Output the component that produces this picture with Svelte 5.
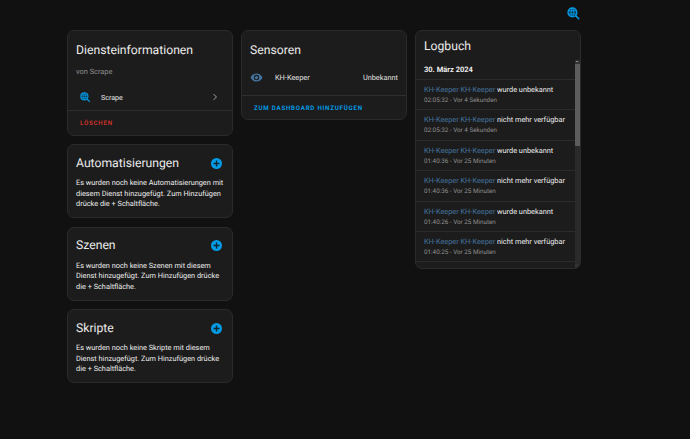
<script>
  const logs = [
    ['wurde unbekannt', '02:05:32 - Vor 4 Sekunden'],
    ['nicht mehr verfügbar', '02:05:32 - Vor 4 Sekunden'],
    ['wurde unbekannt', '01:40:36 - Vor 25 Minuten'],
    ['nicht mehr verfügbar', '01:40:36 - Vor 25 Minuten'],
    ['wurde unbekannt', '01:40:26 - Vor 25 Minuten'],
    ['nicht mehr verfügbar', '01:40:25 - Vor 25 Minuten'],
    ['wurde unbekannt', '01:40:25 - Vor 25 Minuten']
  ];
</script>

{#snippet plus()}
  <svg class="plus" viewBox="0 0 24 24"><circle cx="12" cy="12" r="12" fill="#039be5" /><path d="M12 5.500v13M5.500 12h13" stroke="#10242f" stroke-width="3" fill="none" /></svg>
{/snippet}

{#snippet webSearch(cls)}
  <svg class="globe {cls}" viewBox="0 0 24 24">
    <path d="M15.500 15.500 22.500 22.500" stroke="currentColor" stroke-width="2.800" fill="none" />
    <circle cx="10" cy="10" r="8.200" fill="#0b3a52" stroke="currentColor" stroke-width="2.400" />
    <path d="M2 7h16M2 13h16M10 2c-3.600 5-3.600 11 0 16M10 2c3.600 5 3.600 11 0 16" stroke="currentColor" stroke-width="1.700" fill="none" />
  </svg>
{/snippet}

<div class="page">
  <header class="top">
    {@render webSearch('top-icon')}
  </header>
  <main class="columns">
    <div class="col">
      <section class="card info">
        <h2 class="info-title">Diensteinformationen</h2>
        <p class="by">von Scrape</p>
        <div class="service">
          {@render webSearch('service-icon')}
          <span class="grow">Scrape</span>
          <svg class="chev" viewBox="0 0 24 24"><path d="M8.600 5 15.500 12l-6.900 7" fill="none" stroke="currentColor" stroke-width="2.400" /></svg>
        </div>
        <div class="actions"><span class="btn danger">LÖSCHEN</span></div>
      </section>

      <section class="card pad">
        <div class="head"><h2>Automatisierungen</h2>{@render plus()}</div>
        <p class="note">Es wurden noch keine Automatisierungen mit diesem Dienst hinzugefügt. Zum Hinzufügen drücke die + Schaltfläche.</p>
      </section>

      <section class="card pad">
        <div class="head"><h2>Szenen</h2>{@render plus()}</div>
        <p class="note">Es wurden noch keine Szenen mit diesem Dienst hinzugefügt. Zum Hinzufügen drücke die + Schaltfläche.</p>
      </section>

      <section class="card pad">
        <div class="head"><h2>Skripte</h2>{@render plus()}</div>
        <p class="note">Es wurden noch keine Skripte mit diesem Dienst hinzugefügt. Zum Hinzufügen drücke die + Schaltfläche.</p>
      </section>
    </div>

    <div class="col">
      <section class="card">
        <h2 class="info-title">Sensoren</h2>
        <div class="sensor">
          <svg class="eye" viewBox="0 0 24 24"><path fill="currentColor" d="M12 4.500C7 4.500 2.700 7.600 1 12c1.700 4.400 6 7.500 11 7.500s9.300-3.100 11-7.500c-1.700-4.400-6-7.500-11-7.500zM12 17a5 5 0 1 1 0-10 5 5 0 0 1 0 10zm0-8a3 3 0 1 0 0 6 3 3 0 0 0 0-6z" /></svg>
          <span class="grow">KH-Keeper</span>
          <span>Unbekannt</span>
        </div>
        <div class="actions"><span class="btn primary">ZUM DASHBOARD HINZUFÜGEN</span></div>
      </section>
    </div>

    <div class="col">
      <section class="card logbook">
        <h2 class="log-title">Logbuch</h2>
        <div class="log-body">
          <div class="log-list">
            <div class="date">30. März 2024</div>
            {#each logs as [msg, time]}
              <div class="entry">
                <div class="line"><span class="name">KH-Keeper KH-Keeper</span> {msg}</div>
                <div class="time">{time}</div>
              </div>
            {/each}
          </div>
          <div class="scrollbar">
            <span class="arrow up"></span>
            <span class="thumb"></span>
            <span class="arrow down"></span>
          </div>
        </div>
      </section>
    </div>
  </main>
</div>

<style>
  :global(body) {
    margin: 0;
    background: #111111;
    font-family: Roboto, "Liberation Sans", sans-serif;
    color: #e1e1e1;
    text-rendering: geometricPrecision;
  }
  .page { width: 690px; height: 439px; overflow: hidden; box-sizing: border-box; }
  .top { height: 30px; display: flex; justify-content: flex-end; align-items: flex-start; padding: 7px 110px 0 0; box-sizing: border-box; }
  .globe { color: #039be5; display: block; flex: none; }
  .top-icon { width: 13px; height: 13px; }
  .columns { display: flex; gap: 8px; padding-left: 67px; align-items: flex-start; }
  .col { width: 166px; display: flex; flex-direction: column; gap: 8.500px; }
  .card {
    background: #1c1c1c;
    border: 1px solid #2b2b2b;
    border-radius: 7px;
    box-sizing: border-box;
    overflow: hidden;
  }
  h2 { margin: 0; font-weight: 400; font-size: 12.200px; line-height: 19px; color: #ebebeb; }
  .info { height: 105.500px; }
  .info-title { padding: 10px 9px 0 8px; }
  .by { margin: 0; padding: 6px 8px 0; font-size: 7.400px; line-height: 11px; color: #8f8f8f; }
  .service { display: flex; align-items: center; height: 26px; padding: 0 12px 0 12px; margin-top: 7px; font-size: 7.100px; color: #ebebeb; }
  .service-icon { width: 10.500px; height: 10.500px; margin-right: 10.500px; }
  .grow { flex: 1; }
  .chev { width: 10px; height: 10px; color: #a0a0a0; }
  .actions { border-top: 1px solid #2f2f2f; height: 23px; display: flex; align-items: center; padding: 0 12px; }
  .btn { font-size: 6.200px; font-weight: 700; letter-spacing: 0.750px; }
  .danger { color: #c9302a; }
  .primary { color: #039be5; }
  .sensor { display: flex; align-items: center; height: 24px; margin-top: 5px; padding: 0 8px 0 8px; font-size: 7.350px; color: #e1e1e1; }
  .eye { width: 13px; height: 13px; margin-right: 12px; color: #44739e; }
  .sensor + .actions { margin-top: 6px; }
  .pad { padding: 8px 6px 8px 8px; height: 74px; }
  .head { display: flex; justify-content: space-between; align-items: center; height: 20px; padding-right: 4px; }
  .plus { width: 11px; height: 11px; display: block; flex: none; }
  .note { margin: 5px 0 0; font-size: 7.350px; line-height: 10.500px; color: #ededed; }
  .logbook { height: 239px; display: flex; flex-direction: column; }
  .log-title { padding: 6px 8px 0; height: 24px; box-sizing: border-box; flex: none; line-height: 18px; }
  .log-body { display: flex; flex: 1; min-height: 0; }
  .log-list { flex: 1; min-width: 0; overflow: hidden; }
  .date { height: 25px; box-sizing: border-box; padding: 7px 0 0 8px; font-size: 7.500px; font-weight: 700; line-height: 16px; color: #ededed; border-bottom: 1px solid #2b2b2b; }
  .entry { height: 30.400px; box-sizing: border-box; padding: 4px 0 0 8px; border-bottom: 1px solid #2b2b2b; }
  .line { font-size: 7.350px; line-height: 11px; color: #ededed; white-space: nowrap; }
  .name { color: #44739e; }
  .time { font-size: 6.300px; line-height: 10px; color: #8f8f8f; }
  .scrollbar { width: 5px; margin: 5px 0 0; display: flex; flex-direction: column; background: #2a2a2a; flex: none; }
  .arrow { height: 4px; flex: none; position: relative; background: #333; }
  .arrow.up::after { content: ""; position: absolute; left: 1px; top: 1px; border: 1.500px solid transparent; border-bottom-color: #ddd; border-top: 0; }
  .arrow.down { margin-top: auto; }
  .thumb { height: 82px; background: #5c5c5c; }
</style>
